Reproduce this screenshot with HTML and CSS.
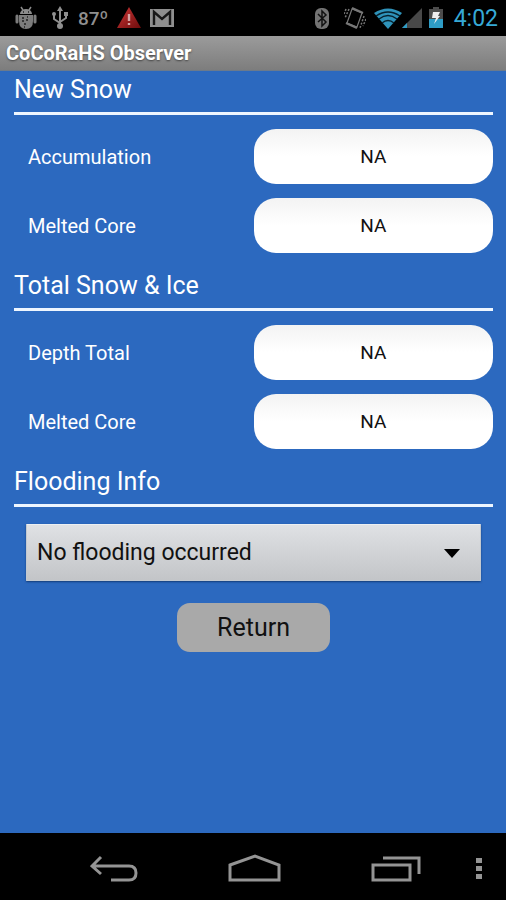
FILE: index.html
```html
<!doctype html>
<html lang="en">
<head>
	<meta charset="UTF-8">
	<meta name="viewport" content="width=device-width, initial-scale=1">
	<title>CoCoRaHS Observer</title>
	<link rel="stylesheet" href="styles.css">
</head>
<body>
	<div class="status">
		<div class="status-left">
			<svg class="icon-android" width="24" height="24" viewBox="0 0 24 24">
				<path d="M7 1l2 3M17 1l-2 3" stroke="#8c8c8c" stroke-width="1.5"/>
				<path d="M6 8a6 5 0 0 1 12 0z" fill="#8c8c8c"/>
				<path d="M5 9h14v6q0 8-7 8t-7-8z" fill="#7c7c7c"/>
				<path d="M3 10v6M21 10v6" stroke="#7c7c7c" stroke-width="3" stroke-linecap="round"/>
				<path d="M9 6h1M14 6h1M8 12h2M13 11h1M8 15h2M12 14h2M10 18h2M10 21h1" stroke="#222" stroke-width="1.6"/>
			</svg>
			<svg class="icon-usb" width="16" height="24" viewBox="0 0 16 24" fill="none" stroke="#8f8f8f" stroke-width="2">
				<path d="M8 4v16M8 17l-6-4V8M8 16l6-4V8"/>
				<path d="M8 0l3 5H5zM12 6h4v4h-4z" fill="#8f8f8f" stroke="none"/>
				<circle cx="2" cy="8" r="2" fill="#8f8f8f" stroke="none"/>
				<circle cx="8" cy="20" r="3" fill="#8f8f8f" stroke="none"/>
			</svg>
			<span class="temp">87º</span>
			<svg class="icon-alert" width="26" height="24" viewBox="0 0 26 24">
				<defs>
					<linearGradient id="red" x1="0" y1="0" x2="1" y2="1">
						<stop offset="0.3" stop-color="#b02a2a"/>
						<stop offset="1" stop-color="#6e0c0c"/>
					</linearGradient>
				</defs>
				<path d="M13 1l12 21H1z" fill="url(#red)"/>
				<path d="M13 8v7M13 17v2" stroke="#d5a5a5" stroke-width="2.4"/>
			</svg>
			<svg class="icon-mail" width="24" height="24" viewBox="0 0 24 24">
				<path d="M0 3h24v18H0z" fill="#8f8f8f"/>
				<path d="M4 19V6l8 7 8-7v13" fill="none" stroke="#181818" stroke-width="2.4"/>
			</svg>
		</div>
		<div class="status-right">
			<svg class="icon-bluetooth" width="16" height="24" viewBox="0 0 16 24">
				<rect x="1" y="2" width="14" height="21" rx="6" fill="#737373"/>
				<path d="M4 8l8 8-4 4V5l4 4-8 7" fill="none" stroke="#111" stroke-width="1.5"/>
			</svg>
			<svg class="icon-vibrate" width="22" height="24" viewBox="0 0 22 24" fill="none" stroke="#777">
				<path d="M8 3l10 4-5 14-10-4z" stroke-width="1.2"/>
				<path d="M8 2l11 5M2 17l11 5" stroke-width="2.2"/>
				<path d="M5 3L1 12M2 3L0 8M20 10l-4 12M22 13l-3 7" stroke-width="1.5" stroke-dasharray="2 1.5"/>
			</svg>
			<svg class="icon-wifi" width="28" height="24" viewBox="0 0 28 24">
				<path d="M0 7q14-9 28 0L14 23z" fill="#2f93ba"/>
				<path d="M2 10q12-8 24 0M5 13q9-7 18 0M8 17q6-5 12 0" fill="none" stroke="#06202c" stroke-width="1.4"/>
			</svg>
			<svg class="icon-signal" width="20" height="24" viewBox="0 0 20 24">
				<path d="M20 2v20H0z" fill="#484848"/>
				<path d="M5 17v5H0z" fill="#2e9cc5"/>
			</svg>
			<svg class="icon-battery" width="16" height="24" viewBox="0 0 16 24">
				<path d="M5 1h6v2h4v11H1V3h4z" fill="#4c4c4c"/>
				<path d="M1 13h14v9H1z" fill="#2e9cc5"/>
				<path d="M5 6h7l-2 4h2l-6 8 2-6H4z" fill="#eee"/>
			</svg>
			<span class="clock">4:02</span>
		</div>
	</div>

	<header class="titlebar">CoCoRaHS Observer</header>

	<form class="content">
		<section>
			<h2>New Snow</h2>
			<div class="row">
				<label for="newAccumulation">Accumulation</label>
				<input type="text" id="newAccumulation" value="NA">
			</div>
			<div class="row">
				<label for="newCore">Melted Core</label>
				<input type="text" id="newCore" value="NA">
			</div>
		</section>
		<section>
			<h2>Total Snow &amp; Ice</h2>
			<div class="row">
				<label for="totalDepth">Depth Total</label>
				<input type="text" id="totalDepth" value="NA">
			</div>
			<div class="row">
				<label for="totalCore">Melted Core</label>
				<input type="text" id="totalCore" value="NA">
			</div>
		</section>
		<section>
			<h2 id="floodingTitle">Flooding Info</h2>
			<div class="spinner">
				<select aria-labelledby="floodingTitle">
					<option>No flooding occurred</option>
				</select>
				<svg class="arrow" width="16" height="9" viewBox="0 0 16 9"><path d="M0 0h16L8 9z"/></svg>
			</div>
		</section>
		<button type="button" class="return">Return</button>
	</form>

	<nav class="navbar">
		<button type="button" aria-label="Back">
			<svg width="48" height="30" viewBox="0 0 48 30" fill="none" stroke="#949494" stroke-width="3">
				<path d="M11 3L2 12l9 8M3 12h36q7 0 7 7t-7 7H21"/>
			</svg>
		</button>
		<button type="button" aria-label="Home">
			<svg width="54" height="30" viewBox="0 0 54 30" fill="none" stroke="#949494" stroke-width="3">
				<path d="M2 11l25-9 24 9v15H2z"/>
			</svg>
		</button>
		<button type="button" aria-label="Recent apps">
			<svg width="50" height="30" viewBox="0 0 50 30" fill="none" stroke="#949494" stroke-width="3">
				<path d="M2 11h37v15H2zM12 4h36v16"/>
			</svg>
		</button>
		<button type="button" class="more" aria-label="Menu">
			<svg width="6" height="30" viewBox="0 0 6 30" fill="#949494">
				<path d="M0 4h6v5H0zM0 12h6v5H0zM0 20h6v5H0z"/>
			</svg>
		</button>
	</nav>
</body>
</html>
```

FILE: styles.css
```css
* {
	box-sizing: border-box;
}
body {
	margin: 0;
	min-height: 100vh;
	display: flex;
	flex-direction: column;
	background: #2c69bf;
	color: #fff;
	font-family: Roboto, "Liberation Sans", sans-serif;
}
svg {
	display: block;
	flex: none;
}

/* status bar */
.status {
	display: flex;
	justify-content: space-between;
	height: 36px;
	padding: 0 8px 0 14px;
	background: #000;
}
.status-left,
.status-right {
	display: flex;
	align-items: center;
}
.status-left {
	gap: 10px;
}
.status-right {
	gap: 6px;
}
.icon-usb {
	margin-left: 4px;
}
.icon-alert {
	margin-left: -2px;
}
.icon-mail {
	margin-left: -2px;
}
.icon-bluetooth {
	margin-right: 8px;
}
.icon-wifi {
	margin-left: 2px;
}
.icon-signal {
	margin-left: -6px;
}
.icon-battery {
	margin-right: 4px;
}
.temp {
	color: #8f8f8f;
	font-size: 19px;
	font-weight: 500;
}
.clock {
	color: #36a9d6;
	font-size: 23px;
}

.titlebar {
	height: 35px;
	padding: 0 6px;
	background: linear-gradient(#9b9b9b, #7d7d7d);
	border-bottom: 1px solid #6b7a8c;
	font-size: 20px;
	font-weight: bold;
	line-height: 35px;
	text-shadow: 0 1px 2px #444;
}

/* form */
.content {
	flex: 1;
	padding: 0 13px 14px 14px;
}
section {
	margin-bottom: 14px;
}
h2 {
	margin: 0 0 14px;
	padding-bottom: 3px;
	border-bottom: 3px solid #eef6ff;
	font-size: 25px;
	font-weight: normal;
	line-height: 38px;
}
.row {
	display: flex;
	align-items: center;
	margin-bottom: 14px;
}
.row label {
	flex: 1;
	padding-left: 14px;
	font-size: 20px;
}
.row input {
	width: 50%;
	height: 55px;
	padding: 0 16px;
	border: 0;
	border-radius: 22px;
	background: linear-gradient(#f3f3f3, #fff 50%);
	color: #111;
	font-family: inherit;
	font-size: 19px;
	text-align: center;
}
.spinner {
	position: relative;
	margin: 17px 12px 22px;
}
.spinner select {
	display: block;
	width: 100%;
	height: 57px;
	padding: 0 48px 0 10px;
	border: 1px solid #c3c9d0;
	border-top-color: #eceff2;
	border-radius: 1px;
	background: linear-gradient(#dfe1e4, #c3c5c8);
	box-shadow: 0 1px 2px #123c78;
	color: #111;
	font-family: inherit;
	font-size: 23px;
	appearance: none;
}
.arrow {
	position: absolute;
	right: 21px;
	top: 25px;
	pointer-events: none;
}
.return {
	display: block;
	width: 153px;
	height: 49px;
	margin: 0 auto;
	border: 0;
	border-radius: 13px;
	background: #a9a9a9;
	color: #111;
	font-family: inherit;
	font-size: 25px;
}

/* system buttons */
.navbar {
	display: flex;
	height: 67px;
	padding: 4px 14px 0 43px;
	background: #000;
}
.navbar button {
	display: flex;
	flex: 1;
	align-items: center;
	justify-content: center;
	padding: 0;
	border: 0;
	background: none;
}
.navbar .more {
	flex: none;
	width: 26px;
}
```
